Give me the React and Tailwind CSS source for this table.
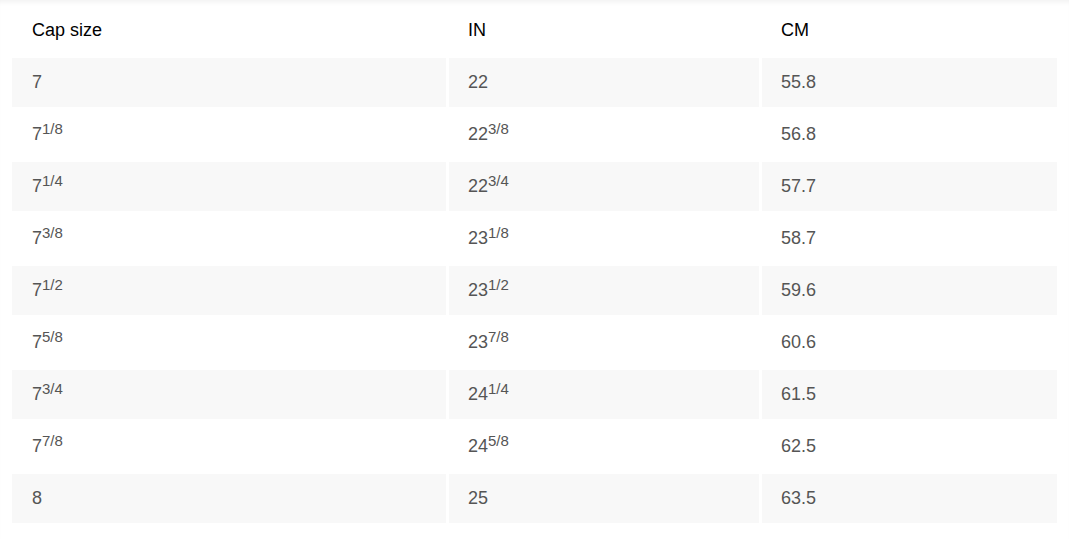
import React from "react";

const rows = [
  ["7", "", "22", "", "55.8"],
  ["7", "1/8", "22", "3/8", "56.8"],
  ["7", "1/4", "22", "3/4", "57.7"],
  ["7", "3/8", "23", "1/8", "58.7"],
  ["7", "1/2", "23", "1/2", "59.6"],
  ["7", "5/8", "23", "7/8", "60.6"],
  ["7", "3/4", "24", "1/4", "61.5"],
  ["7", "7/8", "24", "5/8", "62.5"],
  ["8", "", "25", "", "63.5"],
];

const Frac = ({ whole, frac }) => (
  <>
    {whole}
    {frac && <sup className="text-[15px] top-[-0.4em]">{frac}</sup>}
  </>
);

export default function App() {
  return (
    <div className="min-h-[539px] bg-white px-[9px] pt-[3px] shadow-[inset_0_5px_5px_-3px_rgba(0,0,0,0.06)] font-['Liberation_Sans',Arial,sans-serif] text-[18px]">
      <table className="w-full table-fixed border-separate border-spacing-[3px]">
        <colgroup>
          <col className="w-[434px]" />
          <col className="w-[310px]" />
          <col className="w-[295px]" />
        </colgroup>
        <thead>
          <tr className="h-[49px] text-left text-black">
            <th className="pl-5 font-normal">Cap size</th>
            <th className="pl-[19px] font-normal">IN</th>
            <th className="pl-[19px] font-normal">CM</th>
          </tr>
        </thead>
        <tbody className="text-[#555]">
          {rows.map((r, i) => (
            <tr key={i} className={`h-[49px] ${i % 2 === 0 ? "bg-[#f8f8f8]" : "bg-white"}`}>
              <td className="pl-5">
                <Frac whole={r[0]} frac={r[1]} />
              </td>
              <td className="pl-[19px]">
                <Frac whole={r[2]} frac={r[3]} />
              </td>
              <td className="pl-[19px]">{r[4]}</td>
            </tr>
          ))}
        </tbody>
      </table>
    </div>
  );
}
